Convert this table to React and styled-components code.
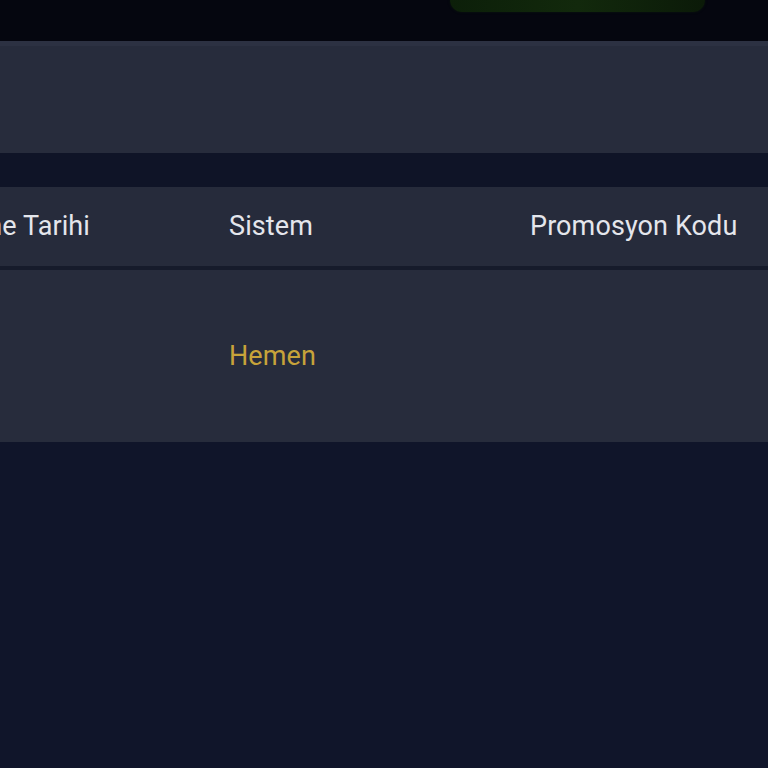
import React from 'react';
import styled, {createGlobalStyle} from "styled-components";

const GlobalStyle = createGlobalStyle`
  html, body {
    margin: 0;
    padding: 0;
    background: #10152a;
    font-family: Roboto, "Liberation Sans", sans-serif;
    overflow: hidden;
  }
`

const Page = styled.div`
  width: 768px;
  height: 768px;
  display: flex;
  flex-direction: column;
  background: #10152a;
  overflow: hidden;
`

const TopBar = styled.div`
  height: 41px;
  background: #05060f;
  display: flex;
  justify-content: flex-end;
  padding-right: 63px;
  box-sizing: border-box;
`

const GreenButton = styled.div`
  width: 255px;
  height: 12px;
  background: linear-gradient(90deg, #0c1f09, #12290c 50%, #0b1a08);
  border-radius: 0 0 22px 22px;
  box-shadow: 0 0 3px rgba(20, 50, 10, 0.35);
`

const Panel = styled.div`
  height: 112px;
  background: #272c3c;
  border-top: 5px solid #2c3142;
  box-sizing: border-box;
`

const Gap = styled.div`
  height: 34px;
  background: #0f1427;
`

const Table = styled.div`
  display: flex;
  flex-direction: column;
  margin-left: -130px;
`

const Row = styled.div`
  display: grid;
  grid-template-columns: 359px 301px 1fr;
  align-items: center;
  height: ${props => props.h}px;
  background: ${props => props.head ? "#262b3b" : "#272c3c"};
  border-bottom: ${props => props.head ? "4px solid #161b2b" : "none"};
`

const HeadCell = styled.div`
  font-size: 27px;
  color: #e4e6ec;
  letter-spacing: 0.1px;
  white-space: nowrap;
  text-align: ${props => props.right ? "right" : "left"};
  padding-right: ${props => props.right ? "139px" : "0"};
  margin-top: -1px;
`

const Cell = styled.div`
  font-size: 27px;
  color: ${props => props.gold ? "#c7a33a" : "#e4e6ec"};
  letter-spacing: 0.1px;
  white-space: nowrap;
`

const App = () => {
    return (
        <Page>
            <GlobalStyle/>
            <TopBar>
                <GreenButton/>
            </TopBar>
            <Panel/>
            <Gap/>
            <Table>
                <Row head h={79}>
                    <HeadCell right>Güncelleme Tarihi</HeadCell>
                    <HeadCell>Sistem</HeadCell>
                    <HeadCell>Promosyon Kodu</HeadCell>
                </Row>
                <Row h={172}>
                    <Cell></Cell>
                    <Cell gold>Hemen</Cell>
                    <Cell></Cell>
                </Row>
            </Table>
        </Page>
    );
};

export default App;
